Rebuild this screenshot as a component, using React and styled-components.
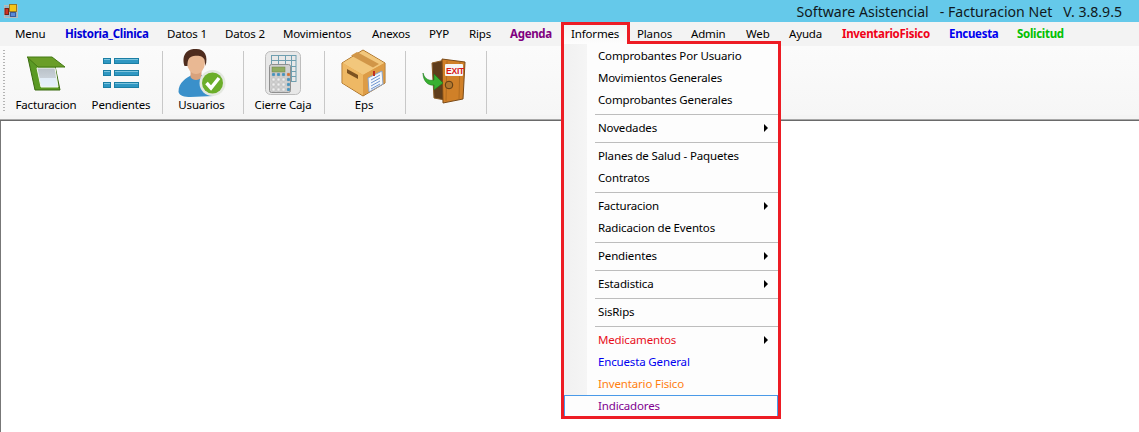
import React from "react";
import styled, { createGlobalStyle } from "styled-components";

const Global = createGlobalStyle`
  html, body { margin: 0; padding: 0; background: #fff; }
  body { font-family: "Noto Sans", "Open Sans", sans-serif; font-size: 11.5px; letter-spacing: -0.15px; color: #000; }
  #root { width: 1139px; height: 432px; overflow: hidden; }
`;
const Page = styled.div`width:1139px;height:432px;display:flex;flex-direction:column;overflow:hidden;`;
const TitleBar = styled.header`height:22px;flex:none;background:#65c9ea;display:flex;align-items:center;padding:0 17px 0 4px;box-sizing:border-box;`;
const TitleText = styled.div`margin-left:auto;font-size:14.1px;letter-spacing:0;white-space:pre;color:#101820;`;
const MenuBar = styled.nav`height:24px;flex:none;background:#f3f3f3;display:flex;align-items:flex-start;padding-left:15px;`;
const MenuItem = styled.div`width:${p=>p.$w}px;padding-left:${p=>p.$pl||0}px;height:22px;line-height:23px;white-space:nowrap;flex:none;color:${p=>p.$c||"#000"};font-weight:${p=>p.$c?700:400};letter-spacing:${p=>p.$c?"-0.3px":"-0.15px"};`;
const TabWrap = styled.div`position:relative;flex:none;width:69px;height:22px;`;
const TabLabel = styled.div`position:relative;z-index:2;box-sizing:border-box;height:22px;border:3px solid #ed1c24;border-bottom:0;background:linear-gradient(#f5f5f5,#fdfdfd);padding-left:7px;line-height:17px;`;
const Dropdown = styled.div`position:absolute;z-index:1;left:0;top:19px;width:220px;height:378px;box-sizing:border-box;border:3px solid #ed1c24;background:linear-gradient(90deg,#f1f1f1 0,#f5f5f5 23px,#fdfdfd 23px);padding-top:1px;overflow:hidden;`;
const Row = styled.div`position:relative;height:22px;box-sizing:border-box;padding-left:34px;line-height:22px;color:${p=>p.$c||"#000"};${p=>p.$hot?"border:1px solid #4a9ae8;line-height:20px;padding-left:33px;background:#fdfdfd;":""}`;
const Arrow = styled.i`position:absolute;right:10px;top:7px;width:0;height:0;border-left:4px solid #000;border-top:4px solid transparent;border-bottom:4px solid transparent;`;
const Sep = styled.div`height:6px;display:flex;align-items:center;padding-left:31px;&::after{content:"";height:1px;flex:1;background:#bdbdbd;}`;
const ToolBar = styled.div`height:69px;flex:none;background:linear-gradient(#fbfbfb,#f6f6f6);display:flex;align-items:stretch;padding-left:3px;box-sizing:border-box;`;
const Grip = styled.div`width:2px;margin:4px 1px 2px 0;background:repeating-linear-gradient(#b4b4b4 0 1px,transparent 1px 3px);flex:none;`;
const ToolBtn = styled.div`width:${p=>p.$w}px;margin-right:${p=>p.$mr||0}px;flex:none;box-sizing:border-box;padding-right:${p=>p.$pr||0}px;display:flex;flex-direction:column;align-items:center;`;
const Svg = styled.svg`display:block;flex:none;overflow:visible;`;
const ToolLabel = styled.div`line-height:16px;white-space:nowrap;`;
const ToolSep = styled.div`width:1px;flex:none;background:#c8c8c8;margin:5px 0 1px;`;
const Edge = styled.div`height:6px;flex:none;background:linear-gradient(#f4f4f4 0 4px,#a8a8a8 4px 5px,#6a6a6a 5px 6px);`;
const Body = styled.main`flex:1;background:#fff;border-left:1px solid #777;`;

const ToolIcon = ({cx,children}) => (<Svg width="70" height="51" viewBox={`${cx-35} 46 70 51`}>{children}</Svg>);

const AppIcon = () => (<svg width="14" height="14" viewBox="0 0 14 14">
  <rect x="0.5" y="1.5" width="13" height="12" fill="#8fb7c8" stroke="#b9b9b9"/>
  <rect x="5.5" y="0.5" width="7" height="7" fill="#f5c518" stroke="#9a7a20"/>
  <rect x="1" y="4.5" width="3.5" height="6" fill="#d03020" stroke="#702018"/>
  <rect x="6.5" y="8.5" width="5" height="4" fill="#5a8ad8" stroke="#3a5a98"/>
</svg>);
const FolderIcon = () => (<ToolIcon cx={46}>
  <defs><linearGradient id="pane" x1="0" y1="0" x2="0" y2="1"><stop offset="0" stopColor="#b9c1c8"/><stop offset=".5" stopColor="#c8d0d8"/><stop offset=".55" stopColor="#e2edf8"/><stop offset="1" stopColor="#e6f0fa"/></linearGradient></defs>
  <path d="M28 58 L35 90 L60 90 L55 66 Z" fill="#5b9a24" stroke="#3a6a10"/>
  <path d="M37 68 L55 68 L58 87 L41 87 Z" fill="url(#pane)" stroke="#f4f8f0"/>
  <path d="M27 57 L52 57 L65 67 L38 67 Z" fill="#6a9e28" stroke="#447a14"/>
</ToolIcon>);
const ListIcon = () => (<ToolIcon cx={121}>
  {[58,70,82].map(y=>(<g key={y} fill="#2f97c2" stroke="#1b7ea4">
    <rect x="103.5" y={y+.5} width="7" height="5"/><rect x="114.5" y={y+.5} width="24" height="5"/>
    <path d={`M104 ${y+1.5}H110M115 ${y+1.5}H138`} stroke="#7cc4de"/>
  </g>))}
</ToolIcon>);
const UserIcon = () => (<ToolIcon cx={201.5}>
  <path d="M178 92 C178 82 186 78 191 75 L201 75 C206 78 212 82 213 96 L190 97 C184 97 179 96 178 92 Z" fill="#3a90ca"/>
  <path d="M190 68 L190 77 C192 81 199 81 201 77 L201 68 Z" fill="#d9a27c"/>
  <ellipse cx="195.5" cy="62" rx="9" ry="12" fill="#e9b893"/>
  <path d="M184 66 C180 53 189 48 196 49 C204 49 208 56 205 66 L204 60 C203 56 198 55 193 56 C188 57 187 60 187 66 Z" fill="#4e2c1e"/>
  <circle cx="212" cy="83" r="13" fill="#e4e8e0"/>
  <circle cx="212" cy="83" r="10.5" fill="#6cae2a"/>
  <path d="M206 83 L210.5 88 L218.5 78" fill="none" stroke="#fff" strokeWidth="3.5"/>
</ToolIcon>);
const keys = [68,73,78,83,88].flatMap(y=>[272,277,282,287].map(x=>[x,y]));
const CalcIcon = () => (<ToolIcon cx={283}>
  <rect x="265.5" y="51.5" width="35" height="43" rx="5" fill="#e8e8e8" stroke="#bdbdbd"/>
  <path d="M271 55.5H296M271 60.5H296M271 66.5H296M290 71.5H296M290 76.5H296M290 81.5H296M271.5 55V64M278.5 55V64M285.5 55V64M291.5 55V82M296 55V82" stroke="#6f9fb0" fill="none"/>
  <rect x="269.5" y="64.5" width="21" height="28" rx="2" fill="#d0d0d0" stroke="#8f8f8f"/>
  <rect x="272" y="67" width="13" height="5" fill="#90ac62" stroke="#6c8048" strokeWidth=".5"/>
  {keys.filter(([,y])=>y>68).map(([x,y])=><rect key={x+"-"+y} x={x} y={y} width="3" height="3" rx=".7" fill={x===287&&y===73?"#e0702a":y===73||x===287?"#3f95c4":"#efefef"} stroke="#a4a4a4" strokeWidth=".4"/>)}
</ToolIcon>);
const BoxIcon = () => (<ToolIcon cx={364}>
  <path d="M363 50 L385 63 L385 83 L363 96 L342 83 L342 63 Z" fill="#e0a048" stroke="#a87028"/>
  <path d="M363 50.5 L384.5 63 L363 75 L342.5 63 Z" fill="#f2c77c"/>
  <path d="M363 75 L363 95.5 L342.5 83 L342.5 63 Z" fill="#eeb864"/>
  <path d="M363 75 L384.5 63 L384.5 83 L363 95.5 Z" fill="#dd9c46"/>
  <path d="M351 55.5 L357 52 L379 64 L373 67.5 Z" fill="#d19648"/>
  <path d="M347 69 L358 75 L358 79 L347 73 Z" fill="#7d5220"/>
  <path d="M368 78 L382 71 L383 84 L369 92 Z" fill="#f4f8fc" stroke="#8aa4cc"/>
  <path d="M371 80L380 75M371 83L380 78M371 86L380 81M371 89L380 84" stroke="#6f96d0"/>
  <rect x="373" y="71" width="2" height="5" fill="#c03020"/>
</ToolIcon>);
const ExitIcon = () => (<ToolIcon cx={446}>
  <path d="M432 63 L445 60 L445 100 L434 98 Z" fill="#5f3d1c" stroke="#8a5c28"/>
  <path d="M442 59 L465 62 L463 99 L443 103 Z" fill="#d08028" stroke="#7a4a18"/>
  <path d="M447 61 L446 101 M460 62 L459 99" stroke="#b26c20" fill="none"/>
  <rect x="445" y="64" width="18" height="12" rx="1" fill="#f6f6f6"/>
  <text x="446" y="74" fontFamily="Liberation Sans" fontWeight="700" fontSize="8.5" letterSpacing="-.2" fill="#d81818">EXIT</text>
  <circle cx="449" cy="85" r="3.8" fill="#b07830" stroke="#5c3a14"/>
  <path d="M423 73 C425 80 430 81 434 80 L434 74 L443 83 L434 90 L434 85 C428 86 423 81 423 73 Z" fill="#38b030" stroke="#1c7a1c" strokeWidth=".6"/>
</ToolIcon>);

const menu = [["Menu",50],["Historia_Clinica",102,"#0000d8"],["Datos 1",58],["Datos 2",58],["Movimientos",89],["Anexos",57],["PYP",40],["Rips",41],["Agenda",51,"#800080"]];
const after = [["Planos",61,null,7],["Admin",55],["Web",43],["Ayuda",53],["InventarioFisico",107,"#f00018"],["Encuesta",68,"#0000f0"],["Solicitud",70,"#00c000"]];
const items = [
 {t:"Comprobantes Por Usuario"},{t:"Movimientos Generales"},{t:"Comprobantes Generales"},"-",
 {t:"Novedades",a:1},"-",{t:"Planes de Salud - Paquetes"},{t:"Contratos"},"-",
 {t:"Facturacion",a:1},{t:"Radicacion de Eventos"},"-",{t:"Pendientes",a:1},"-",{t:"Estadistica",a:1},"-",{t:"SisRips"},"-",
 {t:"Medicamentos",a:1,c:"#e8101c"},{t:"Encuesta General",c:"#0000f0"},{t:"Inventario Fisico",c:"#ff8010"},{t:"Indicadores",c:"#800090",hot:1},
];
export default function App(){
  return (<Page><Global/>
    <TitleBar><AppIcon/><TitleText>{"Software Asistencial   - Facturacion Net   V. 3.8.9.5"}</TitleText></TitleBar>
    <MenuBar>
      {menu.map(([t,w,c])=><MenuItem key={t} $w={w} $c={c}>{t}</MenuItem>)}
      <TabWrap><TabLabel>Informes</TabLabel>
        <Dropdown>{items.map((it,i)=>it==="-"?<Sep key={i}/>:<Row key={i} $c={it.c} $hot={it.hot}>{it.t}{it.a&&<Arrow/>}</Row>)}</Dropdown>
      </TabWrap>
      {after.map(([t,w,c,pl])=><MenuItem key={t} $w={w-(pl||0)} $c={c} $pl={pl}>{t}</MenuItem>)}
    </MenuBar>
    <ToolBar><Grip/>
      <ToolBtn $w={80}><FolderIcon/><ToolLabel>Facturacion</ToolLabel></ToolBtn>
      <ToolBtn $w={70} $mr={6}><ListIcon/><ToolLabel>Pendientes</ToolLabel></ToolBtn>
      <ToolSep/>
      <ToolBtn $w={80} $pr={3}><UserIcon/><ToolLabel>Usuarios</ToolLabel></ToolBtn>
      <ToolSep/>
      <ToolBtn $w={80} $pr={2}><CalcIcon/><ToolLabel>Cierre Caja</ToolLabel></ToolBtn>
      <ToolSep/>
      <ToolBtn $w={80} $pr={2}><BoxIcon/><ToolLabel>Eps</ToolLabel></ToolBtn>
      <ToolSep/>
      <ToolBtn $w={80}><ExitIcon/></ToolBtn>
      <ToolSep/>
    </ToolBar>
    <Edge/>
    <Body/>
  </Page>);
}
